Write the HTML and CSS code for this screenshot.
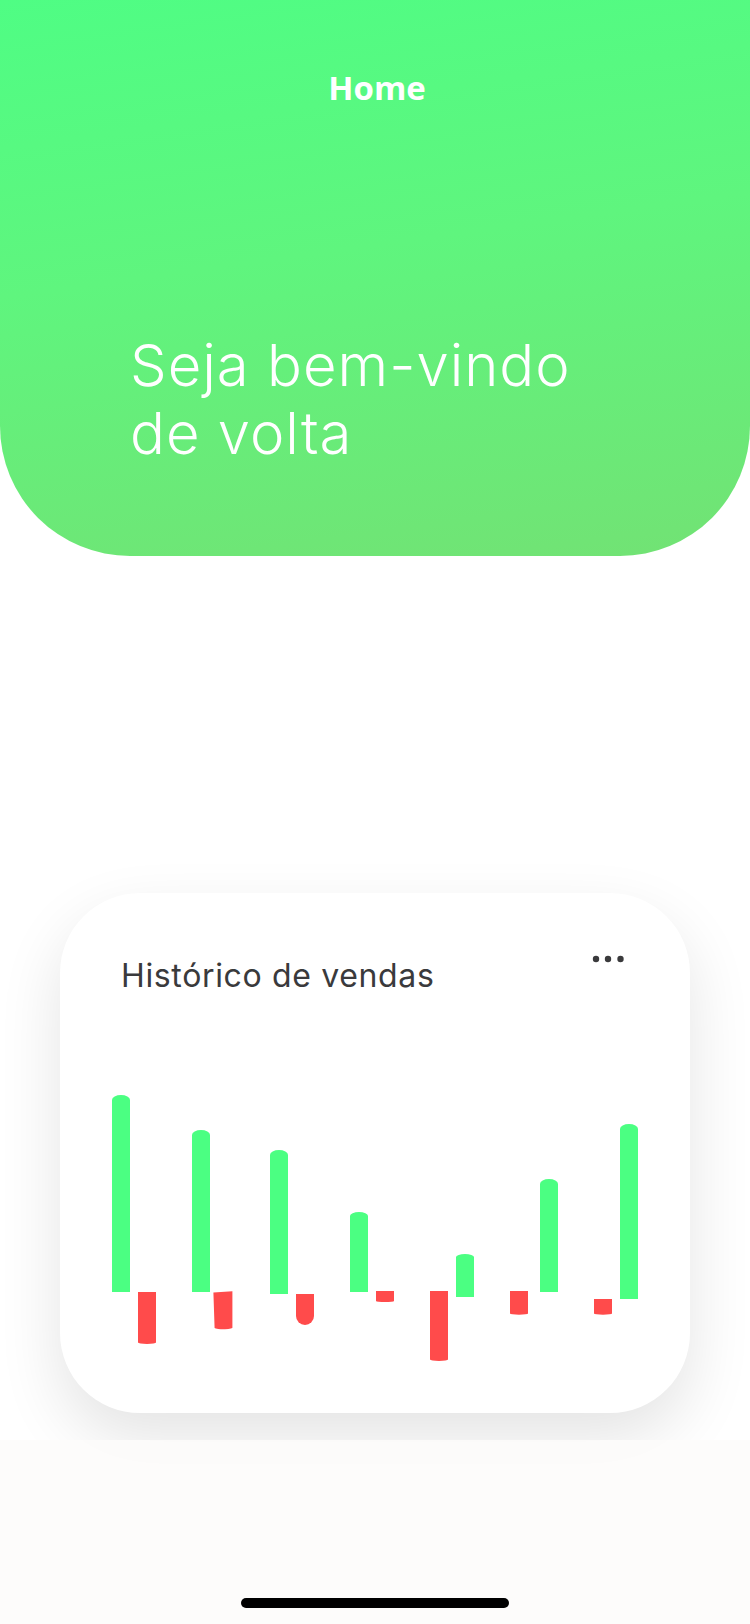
FILE: index.html
```html
<!DOCTYPE html>
<html lang="pt">
<head>
<meta charset="utf-8">
<title>Home</title>
<link rel="stylesheet" href="styles.css">
</head>
<body>
<div class="screen">
  <header class="header">
    <div class="nav-title">Home</div>
    <h1 class="welcome">Seja bem-vindo de volta</h1>
  </header>
  <main class="main">
    <section class="card">
      <div class="card-head">
        <h2 class="card-title">Histórico de vendas</h2>
        <svg class="more" width="32" height="8" viewBox="0 0 32 8" aria-label="Mais opções">
          <circle cx="4" cy="4" r="3.2"/>
          <circle cx="16" cy="4" r="3.2"/>
          <circle cx="28.5" cy="4" r="3.2"/>
        </svg>
      </div>
      <svg class="chart" width="630" height="370" viewBox="60 1000 630 370">
        <g class="up">
          <path d="M112 1292 V1100 A9 5 0 0 1 130 1100 V1292 Z"/>
          <path d="M192 1292 V1135 A9 5 0 0 1 210 1135 V1292 Z"/>
          <path d="M270 1294 V1155 A9 5 0 0 1 288 1155 V1294 Z"/>
          <path d="M350 1292 V1216 A9 4 0 0 1 368 1216 V1292 Z"/>
          <path d="M456 1297 V1257 A9 3 0 0 1 474 1257 V1297 Z"/>
          <path d="M540 1292 V1184 A9 5 0 0 1 558 1184 V1292 Z"/>
          <path d="M620 1299 V1129 A9 5 0 0 1 638 1129 V1299 Z"/>
        </g>
        <g class="down">
          <path d="M138 1292 H156 V1342.5 A9 1.5 0 0 1 138 1342.5 Z"/>
          <path d="M213.4 1292.6 L232.4 1291.2 L232.4 1327.5 A9 1.5 0 0 1 214.6 1328 Z"/>
          <path d="M296 1294 H314 V1316 A9 9 0 0 1 296 1316 Z"/>
          <path d="M376 1291 H394 V1301 A9 1 0 0 1 376 1301 Z"/>
          <path d="M430 1291 H448 V1359.5 A9 1.5 0 0 1 430 1359.5 Z"/>
          <path d="M510 1291 H528 V1313.5 A9 1.2 0 0 1 510 1313.5 Z"/>
          <path d="M594 1299 H612 V1313.5 A9 1.2 0 0 1 594 1313.5 Z"/>
        </g>
      </svg>
    </section>
  </main>
  <footer class="tabbar">
    <div class="home-indicator"></div>
  </footer>
</div>
</body>
</html>
```

FILE: styles.css
```css
* {
  box-sizing: border-box;
}

html,
body {
  margin: 0;
  padding: 0;
  background: #ffffff;
}

body {
  width: 750px;
  height: 1624px;
  overflow: hidden;
  font-family: "Inter", "Noto Sans", sans-serif;
}

.screen {
  display: flex;
  flex-direction: column;
  width: 750px;
  height: 1624px;
}

.header {
  flex: 0 0 556px;
  height: 556px;
  padding-top: 68px;
  background: linear-gradient(172deg, #4ffd84 0%, #5ff57e 45%, #72e274 100%);
  border-radius: 0 0 130px 130px;
  color: #ffffff;
}

.nav-title {
  font-family: "Open Sans", "Noto Sans", sans-serif;
  font-weight: 700;
  font-size: 33px;
  line-height: 40px;
  text-align: center;
  padding-left: 4px;
}

.welcome {
  margin: 223px 0 0 0;
  padding-left: 130px;
  width: 640px;
  font-family: "Inter", "Noto Sans", sans-serif;
  font-weight: 300;
  font-size: 58px;
  line-height: 68px;
  letter-spacing: 1px;
}

.main {
  flex: 1 1 auto;
  padding: 337px 60px 0 60px;
}

.card {
  display: flex;
  flex-direction: column;
  height: 520px;
  padding-top: 63px;
  background: #ffffff;
  border-radius: 80px;
  box-shadow: 0 26px 64px rgba(0, 0, 0, 0.11);
}

.card-head {
  display: flex;
  justify-content: space-between;
  align-items: flex-start;
  padding: 0 66px 0 61px;
}

.card-title {
  margin: 0;
  font-family: "Inter", "Noto Sans", sans-serif;
  font-weight: 400;
  font-size: 32px;
  line-height: 40px;
  color: #3a3a3c;
  letter-spacing: 0.65px;
}

.more {
  display: block;
  margin-top: -1px;
  fill: #3a3a3c;
}

.chart {
  display: block;
  margin-top: 4px;
}

.up path {
  fill: #4bff82;
}

.down path {
  fill: #ff4b4b;
}

.tabbar {
  position: relative;
  z-index: 2;
  flex: 0 0 184px;
  height: 184px;
  display: flex;
  justify-content: center;
  align-items: flex-end;
  padding-bottom: 16px;
  background: rgba(253, 252, 250, 0.86);
}

.home-indicator {
  width: 268px;
  height: 10px;
  border-radius: 5px;
  background: #000000;
}
```
